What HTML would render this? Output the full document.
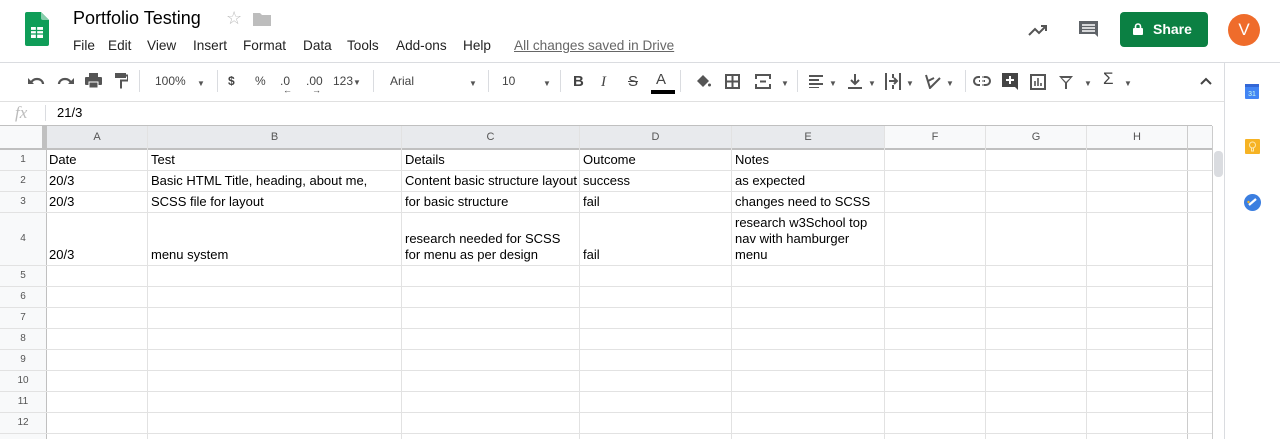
<!DOCTYPE html>
<html><head><meta charset="utf-8"><style>
*{margin:0;padding:0;box-sizing:border-box}
body{width:1280px;height:439px;overflow:hidden;background:#fff;font-family:"Liberation Sans",Arial,sans-serif;position:relative;color:#222}
.a{position:absolute}
.menu span{position:absolute;top:38px;font-size:13.6px;color:#222}
.tb{position:absolute;top:73px;font-size:12px;color:#444;line-height:16px}
.sep{position:absolute;top:70px;width:1px;height:22px;background:#dadce0}
.vl{position:absolute;width:1px;background:#e2e2e2}
.hl{position:absolute;height:1px;background:#e2e2e2;left:0;width:1212px}
.ch{position:absolute;top:131px;font-size:11px;color:#555;text-align:center}
.rh{position:absolute;left:0;width:46px;text-align:center;font-size:10px;color:#555}
.c{position:absolute;font-size:13px;color:#000;line-height:16px;white-space:nowrap}
.dd{font-size:8px;color:#555}
</style></head><body>
<svg class="a" style="left:25px;top:12px" width="24" height="34" viewBox="0 0 24 34"><path d="M2 0h14l8 8v24a2 2 0 0 1-2 2H2a2 2 0 0 1-2-2V2a2 2 0 0 1 2-2z" fill="#0f9d58"/><path d="M16 0l8 8h-6a2 2 0 0 1-2-2z" fill="#87ceac"/><rect x="6" y="15" width="12" height="11" fill="#fff"/><path d="M6 18.5h12M6 22h12M11.5 15v11" stroke="#0f9d58" stroke-width="1.3"/></svg>
<div class="a" style="left:73px;top:8px;font-size:18px;color:#000">Portfolio Testing</div>
<div class="a" style="left:226px;top:8px;font-size:18px;color:#bbb">☆</div>
<svg class="a" style="left:253px;top:12px" width="18" height="14"><path d="M0 1h7l2 2h9v11H0z" fill="#bdbdbd"/></svg>
<div class="menu"><span style="left:73px">File</span><span style="left:108px">Edit</span><span style="left:147px">View</span><span style="left:193px">Insert</span><span style="left:243px">Format</span><span style="left:303px">Data</span><span style="left:347px">Tools</span><span style="left:396px">Add-ons</span><span style="left:463px">Help</span><span style="left:514px;color:#666;text-decoration:underline">All changes saved in Drive</span></div>
<svg class="a" style="left:1028px;top:23px" width="20" height="14"><path d="M1 12l6-6 4 4 7-7M13 3h5v5" stroke="#555" stroke-width="2" fill="none"/></svg>
<svg class="a" style="left:1078px;top:20px" width="22" height="21"><path d="M1 1h19v16l-3-3H1z" fill="#5f6368"/><path d="M4 5h13M4 8h13M4 11h13" stroke="#fff" stroke-width="1.4"/></svg>
<div class="a" style="left:1120px;top:12px;width:88px;height:35px;background:#0b8043;border-radius:4px;color:#fff;font-weight:bold;font-size:14px;line-height:35px;padding-left:33px">Share</div>
<svg class="a" style="left:1133px;top:23px" width="10" height="12"><rect x="0" y="5" width="10" height="7" rx="1" fill="#fff"/><path d="M2.5 5V3.5a2.5 2.5 0 0 1 5 0V5" stroke="#fff" stroke-width="1.6" fill="none"/></svg>
<div class="a" style="left:1228px;top:14px;width:32px;height:32px;border-radius:50%;background:#ef6c2b;color:#fff;font-size:17px;text-align:center;line-height:32px">V</div>
<div class="a" style="left:0;top:62px;width:1224px;height:1px;background:#dadce0"></div>
<div class="a" style="left:1224px;top:62px;width:56px;height:1px;background:#dadce0"></div>
<div class="a" style="left:0;top:101px;width:1224px;height:1px;background:#e0e0e0"></div>
<div class="a" style="left:1224px;top:62px;width:1px;height:377px;background:#dadce0"></div>
<svg class="a" style="left:28px;top:75px" width="18" height="12"><path d="M3 9a6 5 0 0 1 12 0" stroke="#555" stroke-width="2.2" fill="none"/><path d="M0 3v6h6z" fill="#555"/></svg>
<svg class="a" style="left:56px;top:75px" width="18" height="12"><path d="M15 9a6 5 0 0 0-12 0" stroke="#555" stroke-width="2.2" fill="none"/><path d="M18 3v6h-6z" fill="#555"/></svg>
<svg class="a" style="left:85px;top:73px" width="17" height="16"><rect x="4" y="0" width="9" height="4" fill="#555"/><rect x="0" y="4" width="17" height="8" rx="1" fill="#555"/><rect x="4" y="9" width="9" height="6" fill="#555" stroke="#fff" stroke-width="1"/></svg>
<svg class="a" style="left:115px;top:73px" width="13" height="16"><rect x="0" y="0" width="11" height="5" fill="#555"/><path d="M11 2.5h2v5H6v8" stroke="#555" stroke-width="2" fill="none"/></svg>
<div class="sep" style="left:139px"></div>
<div class="tb" style="left:155px">100%</div><div class="tb dd" style="left:197px;top:76px">▼</div>
<div class="sep" style="left:217px"></div>
<div class="tb" style="left:228px;font-weight:bold">$</div>
<div class="tb" style="left:255px">%</div>
<div class="tb" style="left:280px">.0<span style="position:absolute;left:3px;top:9px;font-size:9px">←</span></div>
<div class="tb" style="left:306px">.00<span style="position:absolute;left:6px;top:9px;font-size:9px">→</span></div>
<div class="tb" style="left:333px">123<span class="dd">▼</span></div>
<div class="sep" style="left:373px"></div>
<div class="tb" style="left:390px">Arial</div><div class="tb dd" style="left:469px;top:76px">▼</div>
<div class="sep" style="left:488px"></div>
<div class="tb" style="left:502px">10</div><div class="tb dd" style="left:543px;top:76px">▼</div>
<div class="sep" style="left:560px"></div>
<div class="tb" style="left:573px;font-size:15px;font-weight:bold;top:74px">B</div>
<div class="tb" style="left:601px;font-size:15px;font-style:italic;top:74px;font-family:'Liberation Serif',serif">I</div>
<div class="tb" style="left:628px;font-size:15px;top:74px;text-decoration:line-through">S</div>
<div class="tb" style="left:656px;font-size:15px;top:72px">A</div>
<div class="a" style="left:651px;top:90px;width:24px;height:4px;background:#000"></div>
<div class="sep" style="left:680px"></div>
<svg class="a" style="left:695px;top:73px" width="16" height="16"><path d="M2 8l6-6 6 6-6 6z" fill="#555"/><circle cx="14.5" cy="12" r="1.5" fill="#555"/></svg>
<svg class="a" style="left:725px;top:74px" width="15" height="15"><rect x="1" y="1" width="13" height="13" stroke="#555" stroke-width="2" fill="none"/><path d="M7.5 1v13M1 7.5h13" stroke="#555" stroke-width="2"/></svg>
<svg class="a" style="left:755px;top:74px" width="16" height="15"><path d="M1 5V1h14v4M1 10v4h14v-4M5 7.5h6" stroke="#555" stroke-width="2" fill="none"/></svg>
<div class="tb dd" style="left:781px;top:76px">▼</div>
<div class="sep" style="left:797px"></div>
<svg class="a" style="left:809px;top:75px" width="14" height="13"><path d="M0 1h14M0 5h10M0 9h14M0 13h10" stroke="#555" stroke-width="2"/></svg><div class="tb dd" style="left:829px;top:76px">▼</div>
<svg class="a" style="left:848px;top:74px" width="14" height="15"><path d="M7 0v10M3 6l4 4 4-4M0 14h14" stroke="#555" stroke-width="2" fill="none"/></svg><div class="tb dd" style="left:868px;top:76px">▼</div>
<svg class="a" style="left:885px;top:73px" width="16" height="17"><path d="M1 0v17M15 0v17M4 8h8M9 5l3 3-3 3M8 1v4M8 12v4" stroke="#555" stroke-width="2" fill="none"/></svg><div class="tb dd" style="left:906px;top:76px">▼</div>
<svg class="a" style="left:925px;top:74px" width="16" height="15"><path d="M1 1l4 13 10-10M3 7l6-3" stroke="#555" stroke-width="2" fill="none"/></svg><div class="tb dd" style="left:946px;top:76px">▼</div>
<div class="sep" style="left:965px"></div>
<svg class="a" style="left:973px;top:76px" width="18" height="10"><rect x="1" y="1" width="16" height="8" rx="4" stroke="#555" stroke-width="2" fill="none"/><path d="M6 5h6" stroke="#555" stroke-width="2"/><path d="M8 0v10" stroke="#fff" stroke-width="2"/><path d="M10 0v10" stroke="#fff" stroke-width="1"/></svg>
<svg class="a" style="left:1002px;top:73px" width="16" height="18"><path d="M0 0h16v17l-3-3H0z" fill="#444"/><path d="M8 3v8M4 7h8" stroke="#fff" stroke-width="2"/></svg>
<svg class="a" style="left:1030px;top:74px" width="16" height="16"><rect x="1" y="1" width="14" height="14" stroke="#555" stroke-width="2" fill="none"/><path d="M5 12V7M8 12V4M11 12V9" stroke="#555" stroke-width="1.6"/></svg>
<svg class="a" style="left:1059px;top:75px" width="14" height="14"><path d="M0 1h14L8 8v6H6V8z" fill="#555"/><path d="M3 3h8L7 7z" fill="#fff"/></svg><div class="tb dd" style="left:1084px;top:76px">▼</div>
<div class="tb" style="left:1103px;font-size:17px;top:71px">Σ</div><div class="tb dd" style="left:1124px;top:76px">▼</div>
<svg class="a" style="left:1200px;top:77px" width="12" height="8"><path d="M1 7l5-5 5 5" stroke="#444" stroke-width="2" fill="none"/></svg>
<svg class="a" style="left:1245px;top:84px" width="14" height="15"><rect x="0" y="0" width="14" height="15" rx="1" fill="#4285f4"/><rect x="0" y="0" width="14" height="3" fill="#3367d6"/><text x="7" y="12" font-size="7" fill="#cfe" text-anchor="middle" font-family="Liberation Sans">31</text></svg>
<svg class="a" style="left:1245px;top:139px" width="15" height="15"><rect width="15" height="15" rx="1" fill="#f6b324"/><circle cx="7.5" cy="6" r="3" fill="none" stroke="#fde8b0" stroke-width="1"/><path d="M6.5 9v3h2V9" stroke="#fde8b0" stroke-width="1" fill="none"/></svg>
<svg class="a" style="left:1244px;top:194px" width="17" height="17"><circle cx="8.5" cy="8.5" r="8.5" fill="#3b7ee0"/><path d="M5 11l7-6" stroke="#fff" stroke-width="2.2"/><circle cx="4.5" cy="8" r="1.2" fill="#f6b324"/></svg>
<div class="a" style="left:15px;top:103px;font-family:'Liberation Serif',serif;font-style:italic;color:#bbb;font-size:17px">fx</div>
<div class="a" style="left:45px;top:105px;width:1px;height:16px;background:#dadce0"></div>
<div class="a" style="left:57px;top:105px;font-size:13px;color:#000">21/3</div>
<div class="a" style="left:0;top:125px;width:1212px;height:1px;background:#c0c0c0"></div>
<div class="a" style="left:0;top:126px;width:1212px;height:23px;background:#f8f9fa"></div>
<div class="a" style="left:47px;top:126px;width:838px;height:23px;background:#e8eaed"></div>
<div class="a" style="left:0;top:126px;width:42px;height:23px;background:#f8f9fa"></div>
<div class="a" style="left:42px;top:126px;width:4px;height:23px;background:#c0c0c0"></div>
<div class="a" style="left:0;top:149px;width:46px;height:290px;background:#f8f9fa"></div>
<div class="a" style="left:0;top:148px;width:1212px;height:2px;background:#c0c0c0"></div>
<div class="a" style="left:46px;top:126px;width:1px;height:313px;background:#c0c0c0"></div>
<div class="vl" style="left:147px;top:126px;height:313px"></div>
<div class="vl" style="left:401px;top:126px;height:313px"></div>
<div class="vl" style="left:579px;top:126px;height:313px"></div>
<div class="vl" style="left:731px;top:126px;height:313px"></div>
<div class="vl" style="left:884px;top:126px;height:313px"></div>
<div class="vl" style="left:985px;top:126px;height:313px"></div>
<div class="vl" style="left:1086px;top:126px;height:313px"></div>
<div class="vl" style="left:1187px;top:126px;height:313px;background:#ccc"></div>
<div class="vl" style="left:1212px;top:126px;height:313px;background:#ccc"></div>
<div class="a" style="left:1214px;top:151px;width:9px;height:26px;background:#dadce0;border-radius:4px"></div>
<div class="ch" style="left:47px;width:100px">A</div>
<div class="ch" style="left:148px;width:253px">B</div>
<div class="ch" style="left:402px;width:177px">C</div>
<div class="ch" style="left:580px;width:151px">D</div>
<div class="ch" style="left:732px;width:152px">E</div>
<div class="ch" style="left:885px;width:100px">F</div>
<div class="ch" style="left:986px;width:100px">G</div>
<div class="ch" style="left:1087px;width:100px">H</div>
<div class="hl" style="top:170px"></div><div class="hl" style="top:191px"></div><div class="hl" style="top:212px"></div><div class="hl" style="top:265px"></div><div class="hl" style="top:286px"></div><div class="hl" style="top:307px"></div><div class="hl" style="top:328px"></div><div class="hl" style="top:349px"></div><div class="hl" style="top:370px"></div><div class="hl" style="top:391px"></div><div class="hl" style="top:412px"></div><div class="hl" style="top:433px"></div>
<div class="rh" style="top:154px">1</div><div class="rh" style="top:175px">2</div><div class="rh" style="top:196px">3</div><div class="rh" style="top:233px">4</div><div class="rh" style="top:270px">5</div><div class="rh" style="top:291px">6</div><div class="rh" style="top:312px">7</div><div class="rh" style="top:333px">8</div><div class="rh" style="top:354px">9</div><div class="rh" style="top:375px">10</div><div class="rh" style="top:396px">11</div><div class="rh" style="top:417px">12</div>
<div class="c" style="left:49px;top:152px">Date</div><div class="c" style="left:151px;top:152px">Test</div><div class="c" style="left:405px;top:152px">Details</div><div class="c" style="left:583px;top:152px">Outcome</div><div class="c" style="left:735px;top:152px">Notes</div>
<div class="c" style="left:49px;top:173px">20/3</div><div class="c" style="left:151px;top:173px">Basic HTML Title, heading, about me,</div><div class="c" style="left:405px;top:173px">Content basic structure layout</div><div class="c" style="left:583px;top:173px">success</div><div class="c" style="left:735px;top:173px">as expected</div>
<div class="c" style="left:49px;top:194px">20/3</div><div class="c" style="left:151px;top:194px">SCSS file for layout</div><div class="c" style="left:405px;top:194px">for basic structure</div><div class="c" style="left:583px;top:194px">fail</div><div class="c" style="left:735px;top:194px">changes need to SCSS</div>
<div class="c" style="left:49px;top:247px">20/3</div><div class="c" style="left:151px;top:247px">menu system</div><div class="c" style="left:405px;top:231px">research needed for SCSS<br>for menu as per design</div><div class="c" style="left:583px;top:247px">fail</div><div class="c" style="left:735px;top:215px">research w3School top<br>nav with hamburger<br>menu</div>
</body></html>
